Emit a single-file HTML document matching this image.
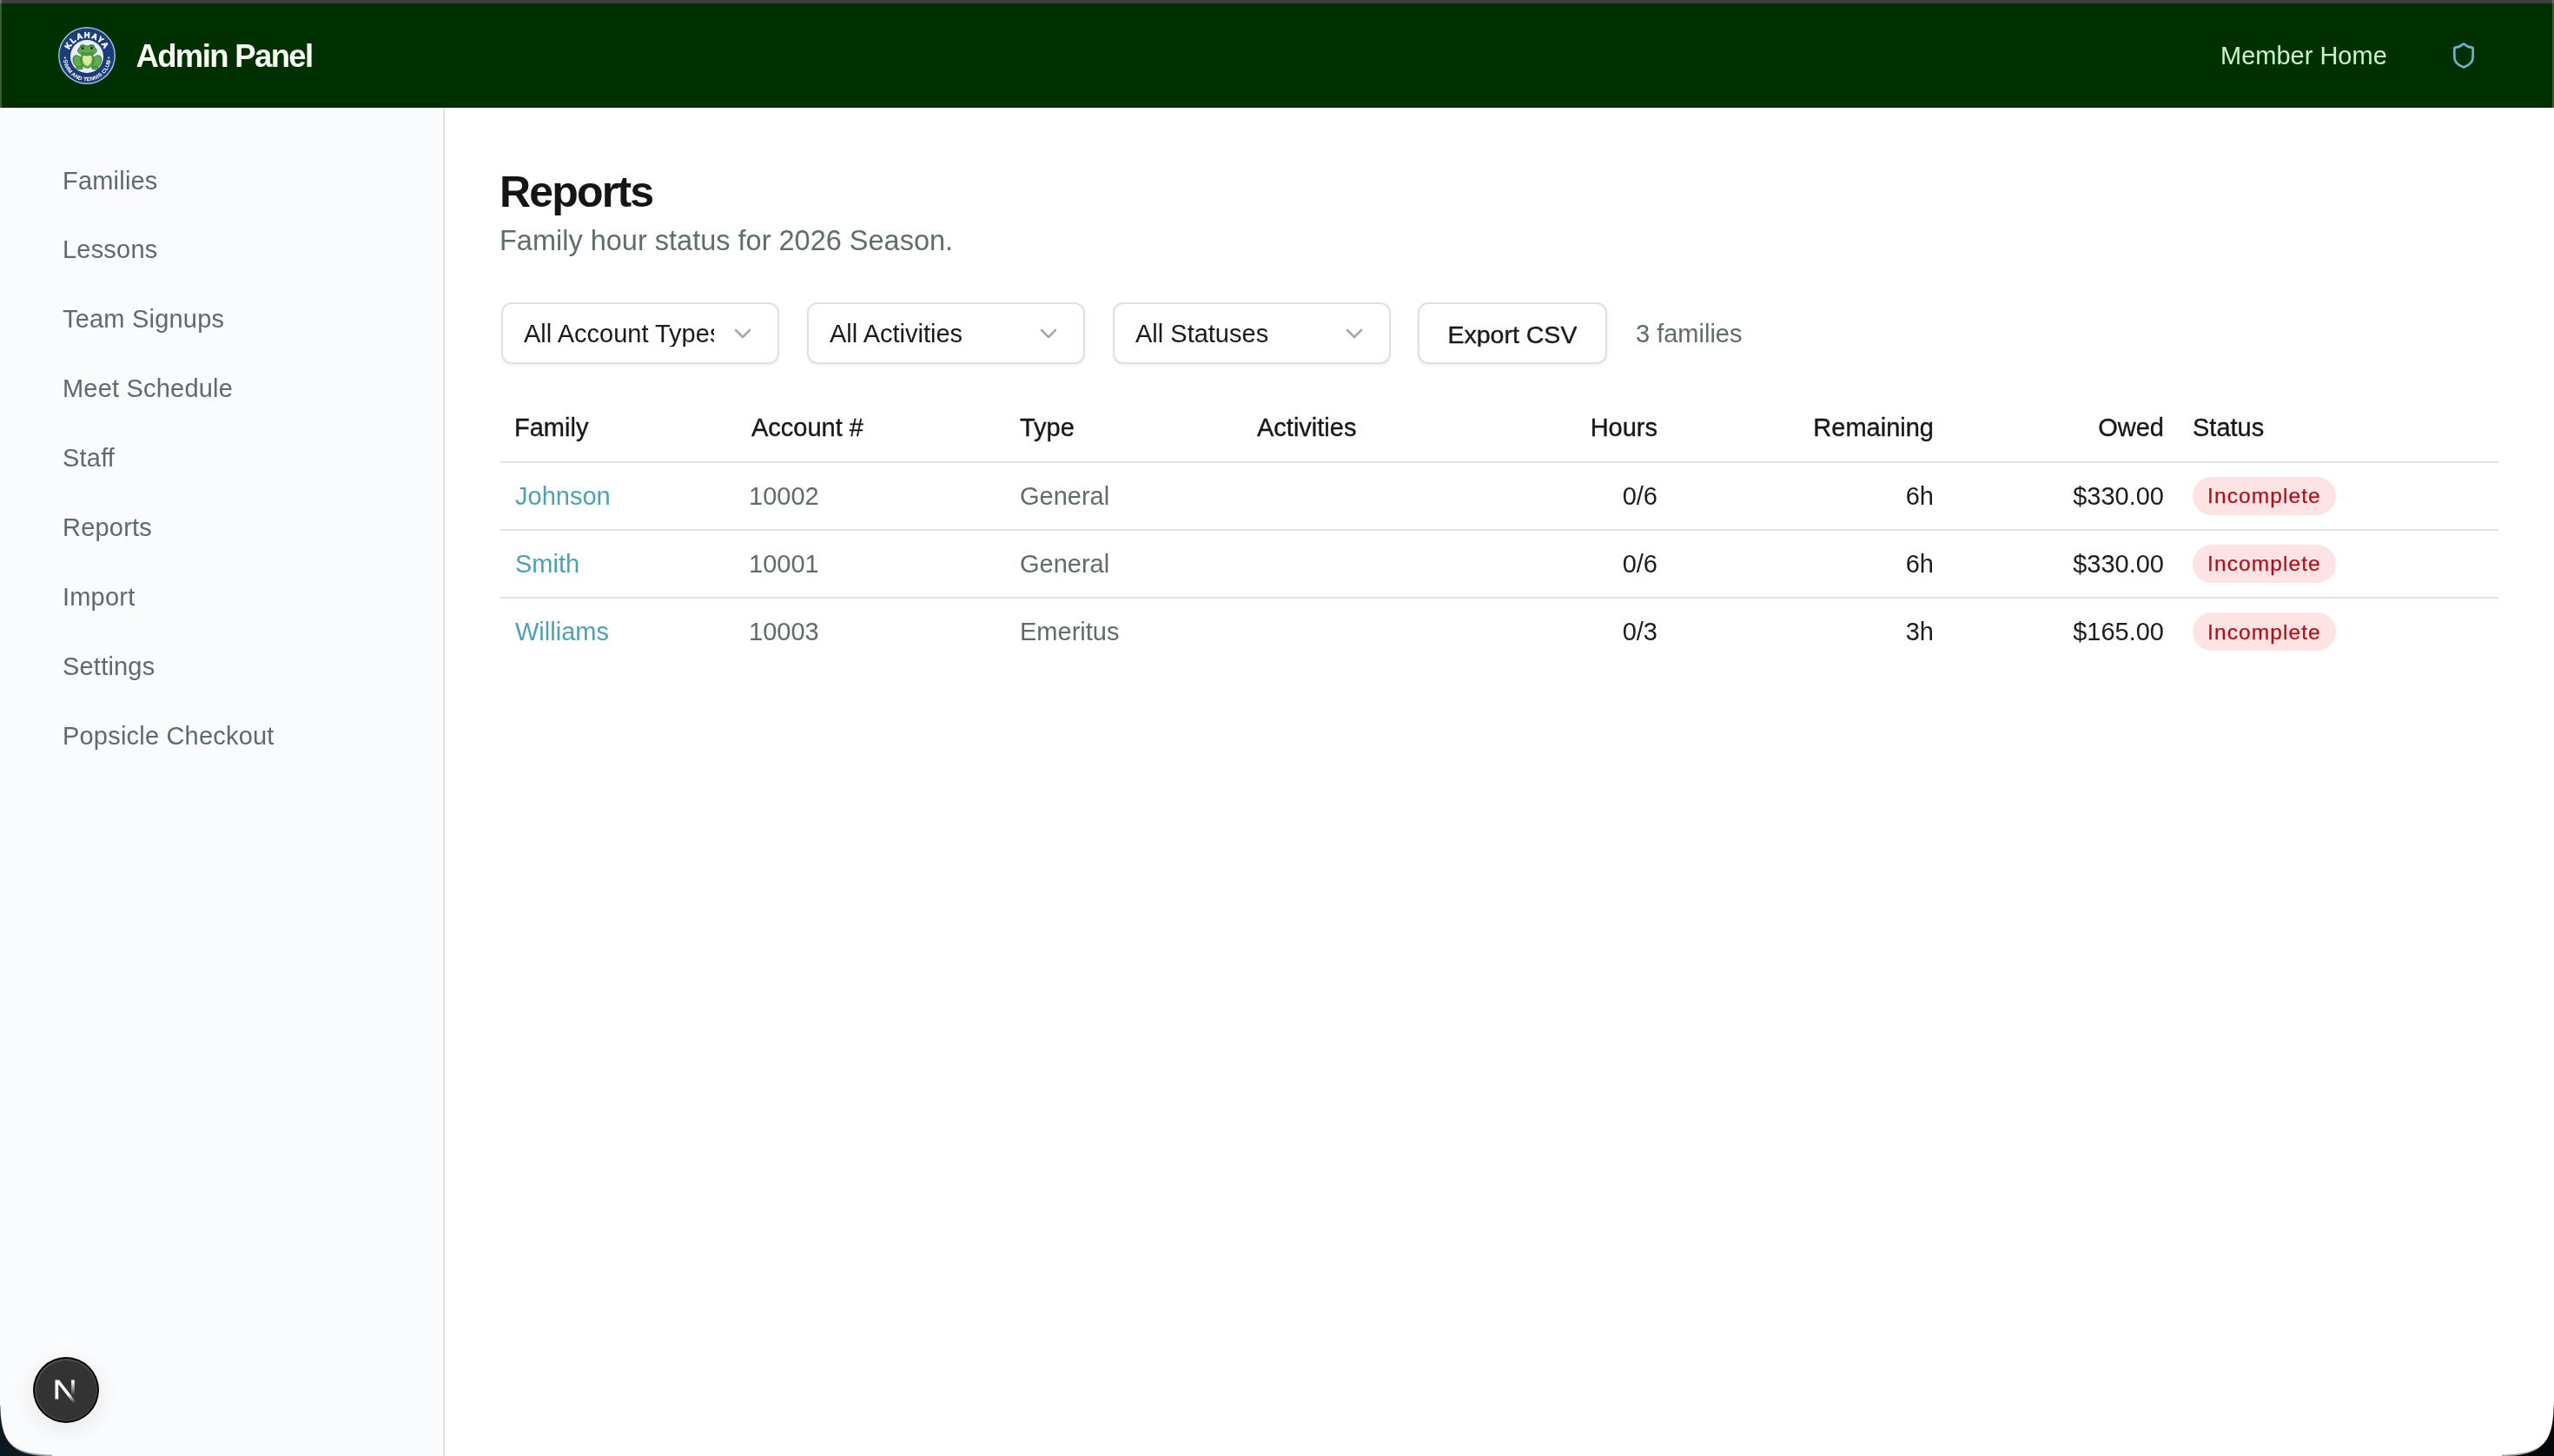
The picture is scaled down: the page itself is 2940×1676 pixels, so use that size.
<!DOCTYPE html>
<html><head><meta charset="utf-8"><title>Admin Panel</title>
<style>
html,body{margin:0;padding:0;}
body{width:2940px;height:1676px;overflow:hidden;background:#0c1822;position:relative;font-family:"Liberation Sans",sans-serif;}
.win{position:absolute;left:0;top:0;width:2940px;height:1676px;background:#fff;overflow:hidden;will-change:transform;}
.abs{position:absolute;white-space:nowrap;line-height:1;}
#topline{position:absolute;left:0;top:0;width:2940px;height:4px;background:#403e41;}
#hdr{position:absolute;left:0;top:4px;width:2940px;height:120px;background:#003000;}
#hdrline{position:absolute;left:0;top:123px;width:2940px;height:1px;background:#002202;}
#side{position:absolute;left:0;top:124px;width:510px;height:1552px;background:#f9fbfc;}
#sideb{position:absolute;left:510px;top:124px;width:2px;height:1552px;background:#dfe5e5;}
.nav{font-size:29px;color:#5e6a6c;left:72px;letter-spacing:0.2px;}
.sel{position:absolute;top:348px;width:316px;height:67px;border:2px solid #dbe2e1;border-radius:12px;background:#fff;box-shadow:0 2px 3px rgba(20,40,40,0.06);}
.sel .t{position:absolute;left:24px;top:20px;font-size:29px;line-height:1;color:#1a1a1a;white-space:nowrap;overflow:hidden;}
.sel svg{position:absolute;right:24px;top:17.5px;}
.th{font-size:29px;color:#171717;-webkit-text-stroke:0.35px #171717;}
.td{font-size:29px;color:#5f6b6d;}
.tl{font-size:29px;color:#4ca1b5;}
.tn{font-size:29px;color:#1c1c1c;}
.rule{position:absolute;left:576px;width:2300px;height:2px;background:#dde3e3;}
.badge{position:absolute;left:2524px;width:165px;height:44px;border-radius:22px;background:#fde3e3;}
.badge span{position:absolute;left:17px;top:10.7px;font-size:24.5px;letter-spacing:1.1px;line-height:1;color:#b10f1c;white-space:nowrap;-webkit-text-stroke:0.25px #b10f1c;}
</style></head>
<body>
<div class="win">
<div id="topline"></div>
<div id="hdr"></div>
<div id="hdrline"></div>
<div style="position:absolute;left:0;top:0;width:2px;height:4px;background:#6a6a6a;"></div>
<div style="position:absolute;left:0;top:4px;width:2px;height:120px;background:#3a5c37;"></div>
<div style="position:absolute;right:0;top:0;width:2px;height:4px;background:#6a6a6a;"></div>
<div style="position:absolute;right:0;top:4px;width:2px;height:120px;background:#3a5c37;"></div>
<!-- logo placeholder -->
<div id="logo" style="position:absolute;left:67px;top:31px;width:66px;height:66px;">
<svg width="66" height="66" viewBox="0 0 66 66">
<defs>
<path id="arcTop" d="M 11.5 34 A 21.5 21.5 0 0 1 54.5 34"/>
<path id="arcBot" d="M 6 35 A 27.2 27.2 0 0 0 60.4 35"/>
</defs>
<circle cx="33" cy="33" r="33" fill="#9ec7e8"/>
<circle cx="33" cy="33" r="31.6" fill="#1d3d78"/>
<circle cx="33" cy="34" r="19" fill="#e6eff5"/>
<text font-family="Liberation Sans" font-weight="bold" font-size="9.3" fill="#fff" stroke="#fff" stroke-width="0.5" letter-spacing="1.15"><textPath href="#arcTop" startOffset="50%" text-anchor="middle">KLAHAYA</textPath></text>
<text font-family="Liberation Sans" font-weight="bold" font-size="6.2" fill="#fff" letter-spacing="0.2"><textPath href="#arcBot" startOffset="50%" text-anchor="middle">SWIM AND TENNIS CLUB</textPath></text>
<circle cx="7.8" cy="35.5" r="1" fill="#fff"/>
<circle cx="58.2" cy="35.5" r="1" fill="#fff"/>
<!-- frog -->
<g stroke="#1f4a22" stroke-width="0.6">
<ellipse cx="22.8" cy="40" rx="5.2" ry="7.8" fill="#5cae4a" transform="rotate(-28 22.8 40)"/>
<ellipse cx="44" cy="40" rx="5.2" ry="7.8" fill="#5cae4a" transform="rotate(28 44 40)"/>
<ellipse cx="24.5" cy="47.3" rx="4" ry="1.6" fill="#5cae4a"/>
<ellipse cx="42.3" cy="47.3" rx="4" ry="1.6" fill="#5cae4a"/>
<ellipse cx="33.4" cy="37.5" rx="7.6" ry="9.8" fill="#5cae4a"/>
<ellipse cx="33.4" cy="36.5" rx="5.2" ry="8.2" fill="#dcea9e" stroke="none"/>
<circle cx="28.3" cy="23.8" r="3.4" fill="#5cae4a"/>
<circle cx="38.5" cy="23.8" r="3.4" fill="#5cae4a"/>
<ellipse cx="33.4" cy="27.3" rx="11" ry="5.6" fill="#5cae4a"/>
</g>
<circle cx="28.2" cy="24.6" r="1.3" fill="#0d1a0d"/>
<circle cx="38.6" cy="24.6" r="1.3" fill="#0d1a0d"/>
<path d="M26.5 29.6 Q33.4 32 40.3 29.6" stroke="#1f4a22" stroke-width="0.6" fill="none"/>
</svg>
</div>
<div class="abs" style="left:156.5px;top:47.1px;font-size:36.5px;font-weight:bold;letter-spacing:-1.65px;color:#f7fcf4;">Admin Panel</div>
<div class="abs" style="left:2556px;top:50px;font-size:29px;color:#c6f5c6;">Member Home</div>
<svg style="position:absolute;left:2820px;top:48px;" width="32" height="32" viewBox="0 0 24 24" fill="none" stroke="#6ab3d4" stroke-width="2" stroke-linecap="round" stroke-linejoin="round"><path d="M20 13c0 5-3.5 7.5-7.66 8.95a1 1 0 0 1-.67-.01C7.5 20.5 4 18 4 13V6a1 1 0 0 1 1-1c2 0 4.5-1.2 6.24-2.72a1.17 1.17 0 0 1 1.52 0C14.51 3.81 17 5 19 5a1 1 0 0 1 1 1z"/></svg>

<div id="side"></div>
<div id="sideb"></div>
<div class="abs nav" style="top:194px;">Families</div>
<div class="abs nav" style="top:273px;">Lessons</div>
<div class="abs nav" style="top:353px;">Team Signups</div>
<div class="abs nav" style="top:433px;">Meet Schedule</div>
<div class="abs nav" style="top:513px;">Staff</div>
<div class="abs nav" style="top:593px;">Reports</div>
<div class="abs nav" style="top:673px;">Import</div>
<div class="abs nav" style="top:753px;">Settings</div>
<div class="abs nav" style="top:833px;">Popsicle Checkout</div>

<!-- main -->
<div class="abs" style="left:575px;top:196px;font-size:50px;font-weight:bold;letter-spacing:-1.8px;color:#151515;">Reports</div>
<div class="abs" style="left:575px;top:261.2px;font-size:32.5px;color:#5f6d6e;">Family hour status for 2026 Season.</div>

<div class="sel" style="left:577px;"><div class="t" style="width:219px;">All Account Types</div>
<svg width="32" height="32" viewBox="0 0 24 24" fill="none" stroke="#a9a9a9" stroke-width="2" stroke-linecap="round" stroke-linejoin="round"><path d="m6 9 6 6 6-6"/></svg></div>
<div class="sel" style="left:929px;"><div class="t">All Activities</div>
<svg width="32" height="32" viewBox="0 0 24 24" fill="none" stroke="#a9a9a9" stroke-width="2" stroke-linecap="round" stroke-linejoin="round"><path d="m6 9 6 6 6-6"/></svg></div>
<div class="sel" style="left:1281px;"><div class="t">All Statuses</div>
<svg width="32" height="32" viewBox="0 0 24 24" fill="none" stroke="#a9a9a9" stroke-width="2" stroke-linecap="round" stroke-linejoin="round"><path d="m6 9 6 6 6-6"/></svg></div>
<div class="sel" style="left:1632px;width:214px;"><div class="t" style="left:32.5px;top:20.5px;font-size:28.5px;-webkit-text-stroke:0.4px #1a1a1a;">Export CSV</div></div>
<div class="abs td" style="left:1883px;top:370px;">3 families</div>

<!-- table -->
<div class="abs th" style="left:592px;top:478px;">Family</div>
<div class="abs th" style="left:865px;top:478px;">Account #</div>
<div class="abs th" style="left:1174px;top:478px;">Type</div>
<div class="abs th" style="left:1447px;top:478px;">Activities</div>
<div class="abs th" style="right:1032px;top:478px;">Hours</div>
<div class="abs th" style="right:714px;top:478px;">Remaining</div>
<div class="abs th" style="right:449px;top:478px;">Owed</div>
<div class="abs th" style="left:2524px;top:478px;">Status</div>
<div class="rule" style="top:531px;"></div>

<div class="abs tl" style="left:593px;top:556.8px;">Johnson</div>
<div class="abs td" style="left:862px;top:556.8px;">10002</div>
<div class="abs td" style="left:1174px;top:556.8px;">General</div>
<div class="abs tn" style="right:1032px;top:556.8px;">0/6</div>
<div class="abs tn" style="right:714px;top:556.8px;">6h</div>
<div class="abs tn" style="right:449px;top:556.8px;">$330.00</div>
<div class="badge" style="top:548.6px;"><span>Incomplete</span></div>
<div class="rule" style="top:609px;"></div>

<div class="abs tl" style="left:593px;top:635px;">Smith</div>
<div class="abs td" style="left:862px;top:635px;">10001</div>
<div class="abs td" style="left:1174px;top:635px;">General</div>
<div class="abs tn" style="right:1032px;top:635px;">0/6</div>
<div class="abs tn" style="right:714px;top:635px;">6h</div>
<div class="abs tn" style="right:449px;top:635px;">$330.00</div>
<div class="badge" style="top:626.8px;"><span>Incomplete</span></div>
<div class="rule" style="top:687px;"></div>

<div class="abs tl" style="left:593px;top:713.2px;">Williams</div>
<div class="abs td" style="left:862px;top:713.2px;">10003</div>
<div class="abs td" style="left:1174px;top:713.2px;">Emeritus</div>
<div class="abs tn" style="right:1032px;top:713.2px;">0/3</div>
<div class="abs tn" style="right:714px;top:713.2px;">3h</div>
<div class="abs tn" style="right:449px;top:713.2px;">$165.00</div>
<div class="badge" style="top:705px;"><span>Incomplete</span></div>

<!-- next.js badge -->
<div style="position:absolute;left:38px;top:1562px;width:76px;height:76px;border-radius:50%;background:#000;box-shadow:0 6px 26px rgba(0,0,0,0.09);overflow:hidden;">
<div style="position:absolute;left:2px;top:2px;width:72px;height:72px;border-radius:50%;background:#4d4d4d;"></div>
<div style="position:absolute;left:3.5px;top:3.5px;width:69px;height:69px;border-radius:50%;background:#333;"></div>
<svg style="position:absolute;left:9px;top:10px;" width="55" height="55" viewBox="0 0 180 180">
<defs>
<linearGradient id="ng1" x1="103" y1="109" x2="128" y2="140" gradientUnits="userSpaceOnUse"><stop stop-color="#fff"/><stop offset="1" stop-color="#fff" stop-opacity="0"/></linearGradient>
<linearGradient id="ng2" x1="121" y1="60" x2="120.8" y2="112" gradientUnits="userSpaceOnUse"><stop stop-color="#fff"/><stop offset="1" stop-color="#fff" stop-opacity="0"/></linearGradient>
</defs>
<path d="M149.508 157.52L69.142 54H54V125.97H66.1136V69.3836L139.999 164.845C143.333 162.614 146.509 160.165 149.508 157.52Z" fill="url(#ng1)"/>
<rect x="115" y="54" width="12" height="72" fill="url(#ng2)"/>
</svg>
</div>
</div>
<svg style="position:absolute;left:0;top:1612px;" width="64" height="64" viewBox="0 0 64 64"><path d="M0 0 C0 46 10 64 60 64 L0 64Z" fill="#0c1822"/><path d="M0 6 C0 48 12 63.2 60 63.2" fill="none" stroke="#000" stroke-opacity="0.35" stroke-width="1.5"/></svg>
<svg style="position:absolute;left:2876px;top:1612px;" width="64" height="64" viewBox="0 0 64 64"><path d="M64 0 C64 46 54 64 4 64 L64 64Z" fill="#060708"/><path d="M64 6 C64 48 52 63.2 4 63.2" fill="none" stroke="#000" stroke-opacity="0.35" stroke-width="1.5"/></svg>
</div>
<script>
(function(){var w=window.innerWidth||2940;if(Math.abs(w-2940)>2){var k=w/2940;document.body.style.transformOrigin='0 0';document.body.style.transform='scale('+k+')';}})();
</script>
</body></html>
